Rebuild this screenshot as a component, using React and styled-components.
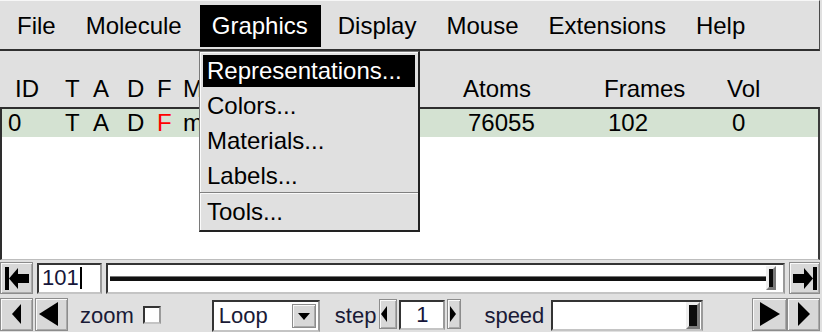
import React from 'react'
import styled, { createGlobalStyle } from 'styled-components'

const GlobalStyle = createGlobalStyle`
  html, body { margin: 0; padding: 0; background: #e0e0e0; }
  body { font-family: "Liberation Sans", Arial, sans-serif; color: #000; }
`

const Window = styled.div`
  position: relative;
  width: 822px;
  height: 332px;
  overflow: hidden;
  box-sizing: border-box;
  padding-right: 2px;
  background: #e0e0e0;
  display: flex;
  flex-direction: column;
`

const MenuBar = styled.div`
  height: 51px;
  box-sizing: border-box;
  display: flex;
  align-items: flex-start;
  gap: 5px;
  padding: 4px 0 0 5px;
  border-top: 1px solid #f7f7f7;
  border-right: 1px solid #4a4a4a;
  border-bottom: 2px solid #303030;
`

const MenuItem = styled.div`
  height: 42px;
  line-height: 42px;
  padding: 0 13px 0 12px;
  font-size: 24px;
  white-space: nowrap;
  background: ${p => (p.$active ? '#000' : 'transparent')};
  color: ${p => (p.$active ? '#fff' : '#000')};
`

const Popup = styled.div`
  position: absolute;
  left: 199px;
  top: 51px;
  width: 221px;
  height: 181px;
  box-sizing: border-box;
  z-index: 5;
  padding: 3px 3px 2px 3px;
  background: #e0e0e0;
  border: 1px solid #7a7a7a;
  border-right: 2px solid #222;
  border-bottom: 2px solid #222;
  box-shadow: inset 1px 1px 0 #fbfbfb;
  display: flex;
  flex-direction: column;
`

const PopupEntry = styled.div`
  height: 32px;
  line-height: 32px;
  margin-bottom: ${p => (p.$last ? '0' : '3px')};
  padding-left: 4px;
  font-size: 24px;
  white-space: nowrap;
  background: ${p => (p.$active ? '#000' : 'transparent')};
  color: ${p => (p.$active ? '#fff' : '#000')};
`

const Divider = styled.div`
  height: 1px;
  margin: 0 -3px 2px;
  border-top: 1px solid #808080;
  border-bottom: 1px solid #fafafa;
`

const HeaderArea = styled.div`
  height: 56px;
  box-sizing: border-box;
  padding-top: 24px;
`

const Cols = styled.div`
  display: grid;
  grid-template-columns: ${p => p.$template};
  padding-left: ${p => p.$indent}px;
  height: 28px;
  line-height: 28px;
  font-size: 24px;
  white-space: nowrap;
  overflow: hidden;
  background: ${p => p.$bg || 'transparent'};
`

const Cell = styled.span`
  color: ${p => (p.$red ? '#f00' : '#000')};
`

const ListBox = styled.div`
  height: 153px;
  box-sizing: border-box;
  background: #fff;
  border-top: 2px solid #2e2e2e;
  border-left: 2px solid #2e2e2e;
  border-right: 2px solid #3a3a3a;
  border-bottom: 1px solid #bdbdbd;
`

const SliderRow = styled.div`
  height: 36px;
  display: flex;
  align-items: center;
  gap: 4px;
`

const BottomRow = styled.div`
  height: 36px;
  display: flex;
  align-items: center;
`

const Btn = styled.div`
  width: ${p => p.$w}px;
  height: ${p => p.$h || 32}px;
  flex: none;
  box-sizing: border-box;
  display: flex;
  align-items: center;
  justify-content: ${p => p.$justify || 'center'};
  padding: 0 ${p => p.$pad || 0}px;
  margin-left: ${p => p.$ml || 0}px;
  background: #d8d8d8;
  border: 1px solid #8c8c8c;
  box-shadow: inset 1px 1px 0 #fafafa, inset -1px -1px 0 #a9a9a9;
`

const Sunken = styled.div`
  box-sizing: border-box;
  background: #fff;
  border: 2px solid;
  border-color: #343434 #9a9a9a #c4c4c4 #343434;
`

const FrameInput = styled(Sunken)`
  width: 65px;
  height: 31px;
  flex: none;
  display: flex;
  align-items: center;
  padding-left: 3px;
  font-size: 22px;
  color: #16163a;
`

const Caret = styled.span`
  width: 2px;
  height: 22px;
  margin-left: 1px;
  background: #000;
`

const Slider = styled(Sunken)`
  flex: 1;
  height: 31px;
  display: flex;
  align-items: center;
  padding: 0 7px 0 2px;
`

const Track = styled.div`
  flex: 1;
  height: 4px;
  background: #111;
  border-top: 1px solid #777;
`

const Thumb = styled.div`
  width: ${p => p.$w}px;
  height: ${p => p.$h}px;
  flex: none;
  box-sizing: border-box;
  background: #0c0c0c;
  border: ${p => p.$b}px solid;
  border-color: #eeeeee #7a7a7a #7a7a7a #eeeeee;
`

const Label = styled.span`
  font-size: 22px;
  color: #1a1a36;
  margin-left: ${p => p.$ml || 0}px;
  margin-top: 4px;
  white-space: nowrap;
`

const Check = styled(Sunken)`
  width: 18px;
  height: 18px;
  margin-left: 9px;
  margin-top: 2px;
  flex: none;
`

const Select = styled(Sunken)`
  width: 108px;
  height: 32px;
  margin-left: 51px;
  margin-top: 4px;
  flex: none;
  display: flex;
  align-items: center;
  justify-content: space-between;
  padding: 0 2px 0 5px;
  font-size: 22px;
  color: #1a1a36;
`

const DropBtn = styled.div`
  width: 24px;
  height: 24px;
  box-sizing: border-box;
  display: flex;
  align-items: center;
  justify-content: center;
  background: #d8d8d8;
  border: 1px solid #8c8c8c;
  box-shadow: inset 1px 1px 0 #fafafa, inset -1px -1px 0 #a9a9a9;
`

const StepInput = styled(Sunken)`
  width: 46px;
  height: 30px;
  margin-left: 2px;
  margin-top: 2px;
  flex: none;
  text-align: center;
  line-height: 26px;
  font-size: 22px;
  color: #16163a;
`

const SpeedSlider = styled(Sunken)`
  width: 152px;
  height: 31px;
  margin-left: 7px;
  margin-top: 2px;
  flex: none;
  display: flex;
  align-items: center;
  justify-content: flex-end;
  padding-right: 1px;
`

const Spacer = styled.div`
  flex: 1;
`

const Tri = ({ w, h, dir }) => (
  <svg width={w} height={h} viewBox={`0 0 ${w} ${h}`}>
    {dir === 'left' && <polygon points={`0,${h / 2} ${w},0 ${w},${h}`} fill="#000" />}
    {dir === 'right' && <polygon points={`0,0 ${w},${h / 2} 0,${h}`} fill="#000" />}
    {dir === 'down' && <polygon points={`0,0 ${w},0 ${w / 2},${h}`} fill="#000" />}
  </svg>
)

const ToStart = () => (
  <svg width="24" height="23" viewBox="0 0 24 23">
    <rect x="0" y="0" width="4" height="23" fill="#000" />
    <polygon points="4,11.5 13,1 13,22" fill="#000" />
    <rect x="13" y="7" width="11" height="9" fill="#000" />
  </svg>
)

const ToEnd = () => (
  <svg width="24" height="23" viewBox="0 0 24 23">
    <rect x="20" y="0" width="4" height="23" fill="#000" />
    <polygon points="20,11.5 11,1 11,22" fill="#000" />
    <rect x="0" y="7" width="11" height="9" fill="#000" />
  </svg>
)

// the molecule-name column is mostly hidden under the open Graphics menu
const headTemplate = '50px 28px 34px 30px 26px 24px 256px 141px 123px 1fr'
const rowTemplate = '57px 28px 34px 30px 26px 24px 261px 140px 124px 1fr'

const menus = ['File', 'Molecule', 'Graphics', 'Display', 'Mouse', 'Extensions', 'Help']
const graphicsItems = ['Representations...', 'Colors...', 'Materials...', 'Labels...']

export default function App() {
  return (
    <>
      <GlobalStyle />
      <Window>
        <MenuBar>
          {menus.map(m => (
            <MenuItem key={m} $active={m === 'Graphics'}>{m}</MenuItem>
          ))}
        </MenuBar>

        <Popup>
          {graphicsItems.map((it, i) => (
            <PopupEntry key={it} $active={i === 0} $last={i === graphicsItems.length - 1}>{it}</PopupEntry>
          ))}
          <Divider />
          <PopupEntry $last>Tools...</PopupEntry>
        </Popup>

        <HeaderArea>
          <Cols $template={headTemplate} $indent={15}>
            <Cell>ID</Cell>
            <Cell>T</Cell>
            <Cell>A</Cell>
            <Cell>D</Cell>
            <Cell>F</Cell>
            <Cell>M</Cell>
            <span />
            <Cell>Atoms</Cell>
            <Cell>Frames</Cell>
            <Cell>Vol</Cell>
          </Cols>
        </HeaderArea>

        <ListBox>
          <Cols $template={rowTemplate} $indent={6} $bg="#d4e2d2">
            <Cell>0</Cell>
            <Cell>T</Cell>
            <Cell>A</Cell>
            <Cell>D</Cell>
            <Cell $red>F</Cell>
            <Cell>m</Cell>
            <span />
            <Cell>76055</Cell>
            <Cell>102</Cell>
            <Cell>0</Cell>
          </Cols>
        </ListBox>

        <SliderRow>
          <Btn $w={33}><ToStart /></Btn>
          <FrameInput>101<Caret /></FrameInput>
          <Slider>
            <Track />
            <Thumb $w={10} $h={24} $b={3} />
          </Slider>
          <Btn $w={31}><ToEnd /></Btn>
        </SliderRow>

        <BottomRow>
          <Btn $w={33} $h={33}><Tri w={9} h={20} dir="left" /></Btn>
          <Btn $w={33} $h={33} $ml={2} $justify="flex-start" $pad={3}><Tri w={19} h={24} dir="left" /></Btn>
          <Label $ml={12}>zoom</Label>
          <Check />
          <Select>
            Loop
            <DropBtn><Tri w={12} h={7} dir="down" /></DropBtn>
          </Select>
          <Label $ml={15}>step</Label>
          <Btn $w={18} $h={30} $ml={3} $justify="flex-start" $pad={1}><Tri w={6} h={16} dir="left" /></Btn>
          <StepInput>1</StepInput>
          <Btn $w={14} $h={30} $ml={2} $justify="flex-start" $pad={2}><Tri w={6} h={16} dir="right" /></Btn>
          <Label $ml={23}>speed</Label>
          <SpeedSlider>
            <Thumb $w={14} $h={27} $b={3} />
          </SpeedSlider>
          <Spacer />
          <Btn $w={35} $h={33}><Tri w={20} h={24} dir="right" /></Btn>
          <Btn $w={33} $h={33}><Tri w={12} h={24} dir="right" /></Btn>
        </BottomRow>
      </Window>
    </>
  )
}
